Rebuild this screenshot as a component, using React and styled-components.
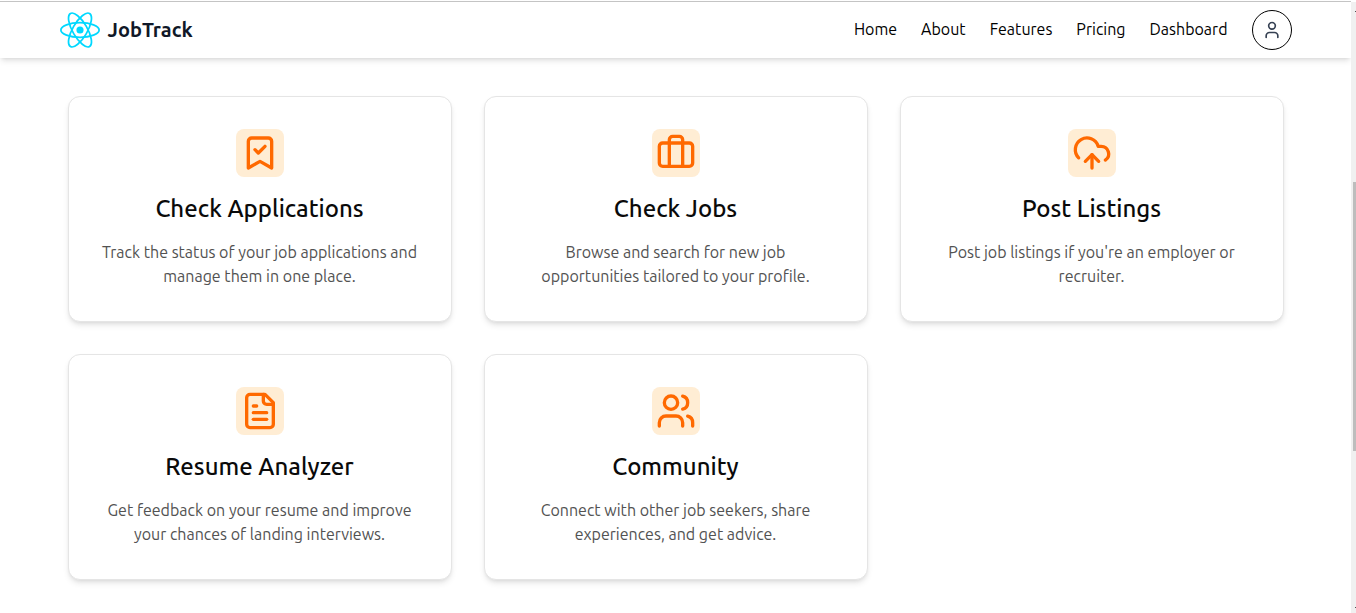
import React from "react";
import styled, { createGlobalStyle } from "styled-components";

const GlobalStyle = createGlobalStyle`
  *, *::before, *::after { box-sizing: border-box; }
  body {
    margin: 0;
    background: #fff;
    color: #101828;
    font-family: Ubuntu, "Noto Sans", "Open Sans", sans-serif;
    font-size: 16px;
    line-height: 24px;
  }
`;

const Shell = styled.div`
  display: flex;
  min-height: 100vh;
  padding-top: 1px;
`;

const Page = styled.div`
  flex: 1;
  min-width: 0;
`;

const Header = styled.header`
  border-top: 1px solid #c4c4c4;
  background: #fff;
  box-shadow: 0 4px 6px -1px rgba(0, 0, 0, 0.1), 0 2px 4px -2px rgba(0, 0, 0, 0.1);
`;

const HeaderInner = styled.div`
  display: flex;
  align-items: center;
  justify-content: space-between;
  max-width: 1280px;
  margin: 0 auto;
  padding: 8px 24px;
`;

const Brand = styled.a`
  display: flex;
  align-items: center;
  gap: 8px;
  color: #101828;
  font-size: 20px;
  font-weight: 600;
  line-height: 28px;
  text-decoration: none;
`;

const Nav = styled.nav`
  display: flex;
  align-items: center;
  gap: 24px;
`;

const NavLink = styled.a`
  padding-bottom: 2px;
  color: #000;
  text-decoration: none;
`;

const ProfileButton = styled.button`
  display: grid;
  place-items: center;
  width: 40px;
  height: 40px;
  padding: 0;
  border: 1px solid #000;
  border-radius: 50%;
  background: #fff;
  color: #364153;
  cursor: pointer;
`;

const CardGrid = styled.main`
  display: grid;
  grid-template-columns: repeat(3, minmax(0, 1fr));
  gap: 32px;
  max-width: 1280px;
  margin: 0 auto;
  padding: 38px 32px 32px;
`;

const Card = styled.section`
  display: flex;
  flex-direction: column;
  align-items: center;
  padding: 32px 32px 33px;
  border: 1px solid #e5e5e5;
  border-radius: 12px;
  background: #fff;
  box-shadow: 0 4px 6px -1px rgba(0, 0, 0, 0.1), 0 2px 4px -2px rgba(0, 0, 0, 0.1);
  text-align: center;
`;

const IconTile = styled.div`
  display: grid;
  place-items: center;
  width: 48px;
  height: 48px;
  border-radius: 8px;
  background: #ffedd4;
  color: #ff6900;
`;

const CardTitle = styled.h2`
  margin: 16px 0 15px;
  color: #0a0a0a;
  font-size: 24px;
  font-weight: 500;
  line-height: 32px;
`;

const CardText = styled.p`
  margin: 0;
  color: #525252;
`;

const ScrollRail = styled.div`
  display: flex;
  flex-direction: column;
  align-items: flex-end;
  justify-content: space-between;
  width: 5px;
  margin-top: 1px;
  padding: 9px 0 5px;
  background: #f0f0f0;
`;

const ScrollThumb = styled.div`
  width: 3px;
  height: 45%;
  margin-top: 14px;
  background: #bdbdbd;
`;

const ScrollArrow = styled.div`
  width: 1px;
  height: 1px;
  background: #505050;
`;

const Icon = ({ size, children }) => (
  <svg
    width={size}
    height={size}
    viewBox="0 0 24 24"
    fill="none"
    stroke="currentColor"
    strokeWidth="2"
    strokeLinecap="round"
    strokeLinejoin="round"
    aria-hidden="true"
  >
    {children}
  </svg>
);

const AtomLogo = () => (
  <svg width="40" height="36" viewBox="-11.5 -10.23174 23 20.46348" aria-hidden="true">
    <circle r="2.05" fill="#00d8ff" />
    <g stroke="#00d8ff" fill="none">
      <ellipse rx="11" ry="4.2" />
      <ellipse rx="11" ry="4.2" transform="rotate(60)" />
      <ellipse rx="11" ry="4.2" transform="rotate(120)" />
    </g>
  </svg>
);

const links = ["Home", "About", "Features", "Pricing", "Dashboard"];

const features = [
  {
    title: "Check Applications",
    text: "Track the status of your job applications and manage them in one place.",
    icon: (
      <>
        <path d="m19 21-7-4-7 4V5a2 2 0 0 1 2-2h10a2 2 0 0 1 2 2Z" />
        <path d="m9 10 2 2 4-4" />
      </>
    ),
  },
  {
    title: "Check Jobs",
    text: "Browse and search for new job opportunities tailored to your profile.",
    icon: (
      <>
        <path d="M16 20V4a2 2 0 0 0-2-2h-4a2 2 0 0 0-2 2v16" />
        <rect width="20" height="14" x="2" y="6" rx="2" />
      </>
    ),
  },
  {
    title: "Post Listings",
    text: "Post job listings if you're an employer or recruiter.",
    icon: (
      <>
        <path d="M12 13v8" />
        <path d="M4 14.899A7 7 0 1 1 15.71 8h1.79a4.5 4.5 0 0 1 2.5 8.242" />
        <path d="m8 17 4-4 4 4" />
      </>
    ),
  },
  {
    title: "Resume Analyzer",
    text: "Get feedback on your resume and improve your chances of landing interviews.",
    icon: (
      <>
        <path d="M15 2H6a2 2 0 0 0-2 2v16a2 2 0 0 0 2 2h12a2 2 0 0 0 2-2V7Z" />
        <path d="M14 2v4a2 2 0 0 0 2 2h4" />
        <path d="M10 9H8" />
        <path d="M16 13H8" />
        <path d="M16 17H8" />
      </>
    ),
  },
  {
    title: "Community",
    text: "Connect with other job seekers, share experiences, and get advice.",
    icon: (
      <>
        <path d="M16 21v-2a4 4 0 0 0-4-4H6a4 4 0 0 0-4 4v2" />
        <circle cx="9" cy="7" r="4" />
        <path d="M22 21v-2a4 4 0 0 0-3-3.87" />
        <path d="M16 3.13a4 4 0 0 1 0 7.75" />
      </>
    ),
  },
];

export default function App() {
  return (
    <>
      <GlobalStyle />
      <Shell>
        <Page>
          <Header>
            <HeaderInner>
              <Brand href="#">
                <AtomLogo />
                JobTrack
              </Brand>
              <Nav>
                {links.map((label) => (
                  <NavLink key={label} href="#">
                    {label}
                  </NavLink>
                ))}
                <ProfileButton type="button" aria-label="Profile">
                  <Icon size={20}>
                    <path d="M19 21v-2a4 4 0 0 0-4-4H9a4 4 0 0 0-4 4v2" />
                    <circle cx="12" cy="7" r="4" />
                  </Icon>
                </ProfileButton>
              </Nav>
            </HeaderInner>
          </Header>
          <CardGrid>
            {features.map(({ title, text, icon }) => (
              <Card key={title}>
                <IconTile>
                  <Icon size={40}>{icon}</Icon>
                </IconTile>
                <CardTitle>{title}</CardTitle>
                <CardText>{text}</CardText>
              </Card>
            ))}
          </CardGrid>
        </Page>
        <ScrollRail aria-hidden="true">
          <ScrollArrow />
          <ScrollThumb />
          <ScrollArrow />
        </ScrollRail>
      </Shell>
    </>
  );
}
